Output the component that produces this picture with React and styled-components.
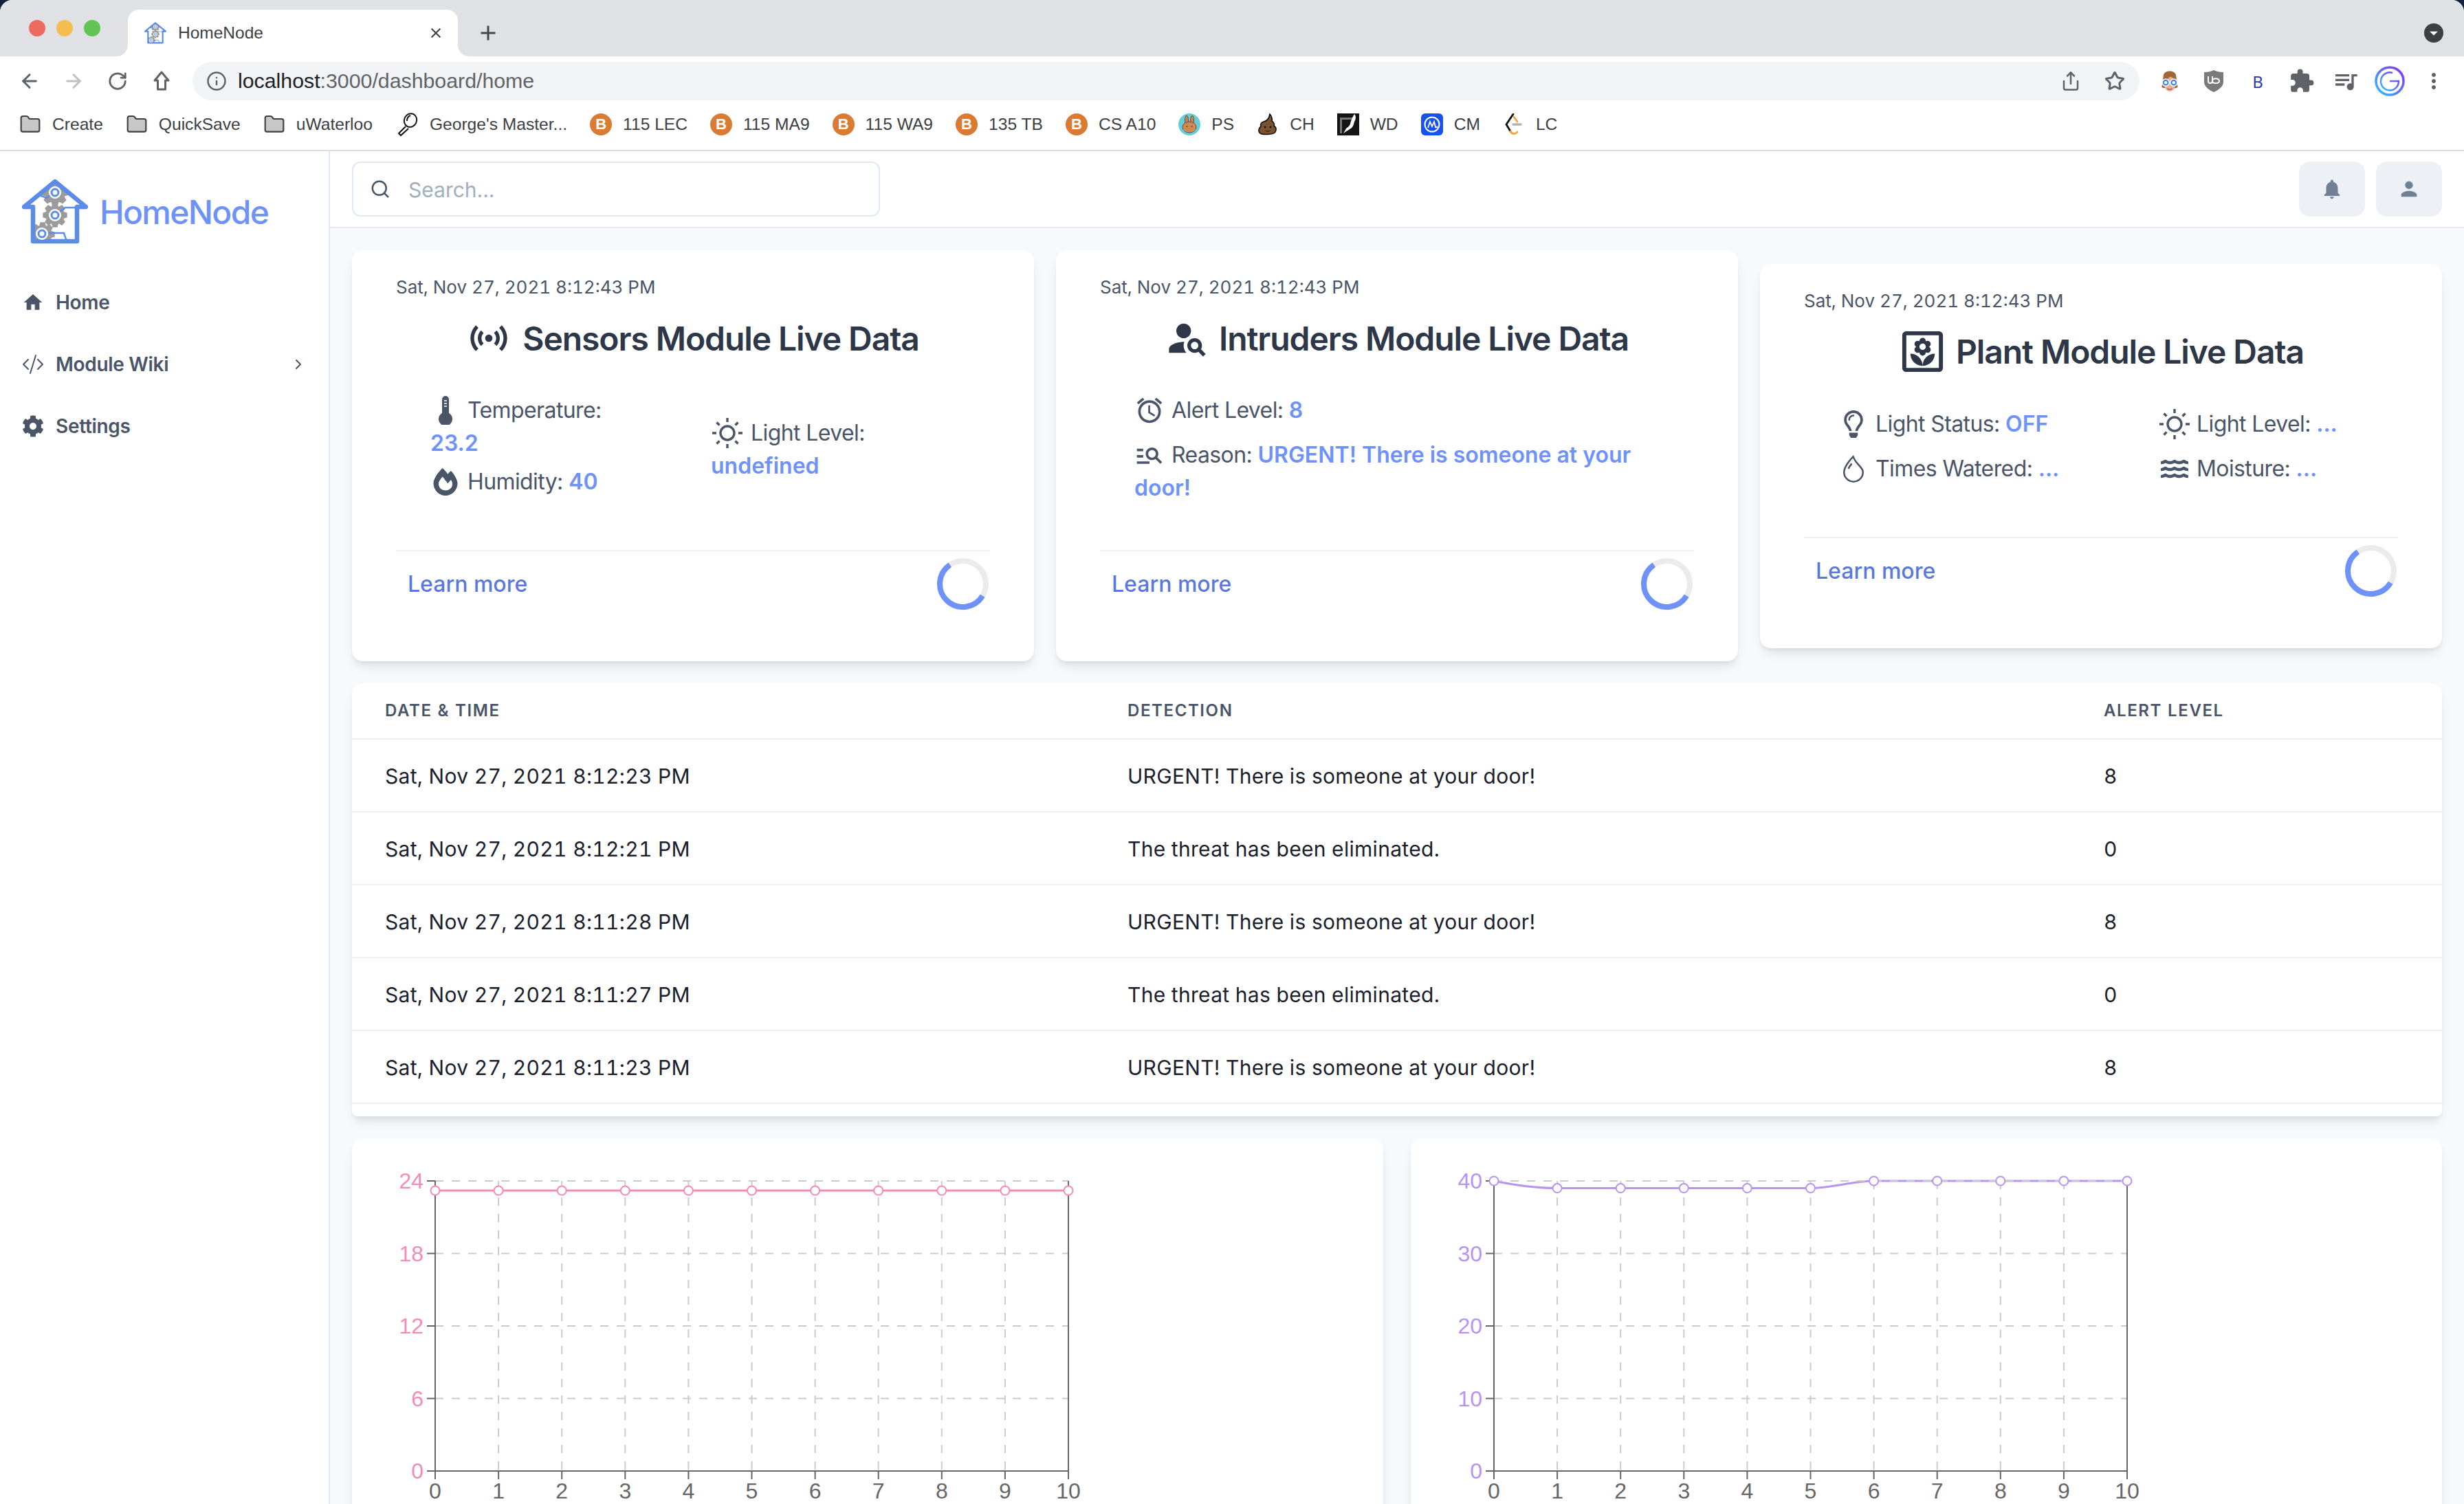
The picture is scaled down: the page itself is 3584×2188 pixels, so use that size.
import React, { useId } from "react";
import styled, { createGlobalStyle } from "styled-components";
import { FaCog, FaFireAlt, FaRegLightbulb, FaWater } from "react-icons/fa";
import { BsCodeSlash, BsDroplet } from "react-icons/bs";
import { FiChevronRight, FiSearch } from "react-icons/fi";
import {
  MdHome, MdNotifications, MdPerson, MdSensors, MdPersonSearch, MdOutlineYard, MdOutlineAccessAlarm,
  MdManageSearch, MdQueueMusic, MdMoreVert, MdArrowDropDown, MdClose, MdAdd, MdExtension,
} from "react-icons/md";
import { ArrowLeft, ArrowRight, RotateCw, Info, Share, Star, Folder } from "lucide-react";

const BLUE = "#6e92f7";

const Global = createGlobalStyle`
  html, body { margin: 0; padding: 0; background: #12203a; }
  * { box-sizing: border-box; }
  #root { width: 3584px; height: 2188px; overflow: hidden; }
`;

const Frame = styled.div`
  width: 3584px; height: 2188px; display: flex; flex-direction: column;
  border-radius: 18px 18px 0 0; overflow: hidden; background: #fff;
  font-family: Inter, "Noto Sans", sans-serif;
`;

/* Browser chrome */
const TabStrip = styled.div`
  height: 82px; background: #dfe1e5; display: flex; align-items: flex-end; position: relative; flex: none;
`;
const Lights = styled.div`
  width: 186px; height: 82px; padding-left: 42px; display: flex; align-items: center; gap: 16px;
`;
const Light = styled.span`
  width: 24px; height: 24px; border-radius: 50%; background: ${p => p.$c};
`;
const Tab = styled.div`
  width: 480px; height: 68px; background: #fff; border-radius: 16px 16px 0 0;
  display: flex; align-items: center; padding: 0 20px 0 24px; position: relative;
  font: 24.5px "Liberation Sans", Arial, sans-serif; color: #3c4043;
  &::before, &::after { content: ""; position: absolute; bottom: 0; width: 16px; height: 16px; }
  &::before { left: -16px; background: radial-gradient(circle at 0 0, #dfe1e5 15.5px, #fff 16px); }
  &::after { right: -16px; background: radial-gradient(circle at 100% 0, #dfe1e5 15.5px, #fff 16px); }
`;
const TabTitle = styled.span` margin-left: 17px; flex: 1; `;
const NewTab = styled.div`
  width: 40px; height: 68px; margin-left: 24px; display: flex; align-items: center; justify-content: center; color: #45474a;
`;
const TabMenu = styled.div`
  position: absolute; right: 30px; top: 34px; width: 28px; height: 28px; border-radius: 50%;
  background: #3c4043; color: #fff; display: flex; align-items: center; justify-content: center;
`;
const Toolbar = styled.div`
  height: 64px; display: flex; align-items: flex-end; padding: 0 12px 0 11px; flex: none; background: #fff;
`;
const ToolBtn = styled.div`
  width: 64px; height: 56px; flex: none; display: flex; align-items: center; justify-content: center;
  color: ${p => p.$c || "#5f6368"};
`;
const LetterMark = styled.span` font: 24px "Noto Sans", sans-serif; `;
const AddressBar = styled.div`
  flex: 1; height: 56px; margin: 0 12px 0 13px; background: #f1f3f4; border-radius: 28px;
  display: flex; align-items: center; padding: 0 4px 0 20px; color: #5f6368;
`;
const Url = styled.div`
  flex: 1; margin-left: 16px; font: 30.3px "Liberation Sans", Arial, sans-serif; color: #5f6368;
  b { font-weight: 400; color: #202124; }
`;
const Bookmarks = styled.div`
  height: 74px; display: flex; align-items: center; padding: 0 0 2px 28px; gap: 33px; flex: none;
  border-bottom: 2px solid #dadce0; background: #fff;
  font: 24.6px "Liberation Sans", Arial, sans-serif; color: #3c4043;
`;
const Mark = styled.div`
  display: flex; align-items: center; gap: 16px; white-space: nowrap;
`;
const Coin = styled.span`
  width: 32px; height: 32px; border-radius: 50%; background: #d97b33; color: #fff; flex: none;
  display: flex; align-items: center; justify-content: center; font: 700 22px "Liberation Sans", sans-serif;
`;

/* Application shell */
const Shell = styled.div` flex: 1; display: flex; min-height: 0; `;
const Sidebar = styled.aside`
  width: 480px; flex: none; border-right: 2px solid #e2e8f0; background: #fff; padding-top: 40px;
`;
const Brand = styled.div`
  display: flex; align-items: center; gap: 17px; padding-left: 32px; height: 94px;
  font-size: 48px; font-weight: 500; letter-spacing: -1.7px; color: ${BLUE}; margin-bottom: 41px;
  padding-top: 2px;
`;
const NavItem = styled.div`
  height: 90px; display: flex; align-items: center; padding: 0 32px; font-size: 28px; font-weight: 600;
  letter-spacing: -0.3px; color: #4a5568;
`;
const NavIcon = styled.span`
  width: 32px; height: 32px; display: flex; align-items: center; justify-content: center; margin-right: 17px;
`;
const NavLabel = styled.span` flex: 1; `;

const Content = styled.div` flex: 1; min-width: 0; display: flex; flex-direction: column; `;
const TopBar = styled.header`
  height: 112px; flex: none; background: #fff; border-bottom: 2px solid #e2e8f0; padding: 16px 32px;
  display: flex; align-items: center; gap: 16px;
`;
const Search = styled.div`
  width: 768px; height: 80px; border: 2px solid #e2e8f0; border-radius: 12px; display: flex; align-items: center;
  padding-left: 24px; margin-right: auto; color: #4a5568; background: #fff;
`;
const SearchText = styled.span` margin-left: 26px; padding-top: 2px; font-size: 30px; color: #a0aec0; `;
const IconButton = styled.div`
  width: 96px; height: 80px; border-radius: 16px; background: #edf0f5; color: #718096;
  display: flex; align-items: center; justify-content: center;
`;
const Main = styled.main`
  flex: 1; min-height: 0; background: #f7fafc; padding: 32px; display: flex; flex-direction: column; gap: 32px; overflow: hidden;
`;

/* Module cards */
const CardRow = styled.section`
  display: grid; grid-template-columns: repeat(3, 992px); gap: 32px; align-items: stretch; flex: none;
`;
const Card = styled.article`
  background: #fff; border-radius: 16px; display: flex; flex-direction: column; padding: 38px 64px 0;
  box-shadow: 0 10px 15px -3px rgba(0,0,0,.1), 0 4px 6px -2px rgba(0,0,0,.05);
  align-self: ${p => (p.$center ? "center" : "stretch")};
`;
const Stamp = styled.div`
  font-size: 26px; line-height: 32px; color: #4a5568; font-variant-numeric: tabular-nums;
`;
const Title = styled.h2`
  margin: 28px 0 0; height: 60px; display: flex; align-items: center; justify-content: center;
  font-size: 48px; font-weight: 600; letter-spacing: -1.08px; color: #2d3748; white-space: nowrap;
`;
const TitleIcon = styled.span`
  display: flex; align-items: center; justify-content: center; margin-right: ${p => p.$gap}px; width: ${p => p.$size}px; height: 60px;
`;
const Body = styled.div`
  flex: 1; padding: 51px 0 ${p => p.$pb || 75}px 50px; font-size: 32px; line-height: 48px; letter-spacing: -0.6px; color: #4a5568;
`;
const StatGrid = styled.div`
  display: grid; grid-template-columns: ${p => p.$first}px 1fr; row-gap: ${p => p.$gap || 0}px; align-items: center;
`;
const StatColumn = styled.div`
  display: flex; flex-direction: column; gap: 8px; margin-top: ${p => p.$top || 0}px;
`;
const Stat = styled.div`
  max-width: ${p => (p.$max ? `${p.$max}px` : "none")}; margin-bottom: ${p => p.$mb || 0}px;
`;
const StatIcon = styled.span`
  display: inline-flex; align-items: center; justify-content: center; vertical-align: top;
  width: ${p => p.$w || 44}px; height: 48px; margin-right: 10px; color: #4a5568;
`;
const Value = styled.span` font-weight: 600; letter-spacing: 0; color: ${BLUE}; `;
const CardFoot = styled.div`
  height: 162px; border-top: 2px solid #edf2f7; padding: 10px 2px 0 17px; display: flex; align-items: flex-start; justify-content: space-between; flex: none;
`;
const LearnMore = styled.a`
  height: 75px; display: flex; align-items: center; font-size: 32px; font-weight: 500; color: #5a78e0;
`;

/* Table */
const TableCard = styled.section`
  background: #fff; border-radius: 16px 16px 8px 8px; height: 630px; flex: none; overflow: hidden;
  box-shadow: 0 10px 15px -3px rgba(0,0,0,.1), 0 4px 6px -2px rgba(0,0,0,.05);
`;
const TRow = styled.div`
  display: grid; grid-template-columns: 1080px 1420px 1fr; align-items: center;
  height: ${p => (p.$head ? 82 : 106)}px; border-bottom: 2px solid #edf2f7;
  padding-top: ${p => (p.$head ? 0 : 2)}px; padding-bottom: ${p => (p.$head ? 2 : 0)}px;
  font-size: ${p => (p.$head ? 24 : 30)}px; font-weight: ${p => (p.$head ? 600 : 400)};
  color: ${p => (p.$head ? "#4a5568" : "#1a202c")};
  letter-spacing: ${p => (p.$head ? "1.6px" : "0.3px")};
  font-variant-numeric: tabular-nums;
  text-transform: ${p => (p.$head ? "uppercase" : "none")};
`;
const TCell = styled.div` padding-left: 48px; `;

/* Charts */
const ChartRow = styled.section`
  display: grid; grid-template-columns: repeat(2, 1500px); gap: 40px; flex: none;
`;
const ChartCard = styled.div`
  background: #fff; border-radius: 16px; height: 560px;
  box-shadow: 0 10px 15px -3px rgba(0,0,0,.1), 0 4px 6px -2px rgba(0,0,0,.05);
`;
const ChartSvg = styled.svg`
  display: block; width: 1500px; height: 560px; font-family: "Liberation Sans", Arial, sans-serif; font-size: 32px;
`;

function gearPath(cx, cy, R, r, n) {
  const pts = [];
  for (let i = 0; i < n; i++) {
    const a = (i / n) * Math.PI * 2;
    const w = (Math.PI * 2) / n;
    [[-0.5, r], [-0.26, R], [0.26, R], [0.5, r]].forEach(([o, rad]) => {
      const t = a + o * w * 0.95;
      pts.push(`${(cx + Math.cos(t) * rad).toFixed(2)} ${(cy + Math.sin(t) * rad).toFixed(2)}`);
    });
  }
  return `M${pts.join("L")}Z`;
}

function Logo({ width, height }) {
  const id = useId();
  const gears = [[48, 19, 20, 15], [48, 52, 18, 13.5], [30, 80, 18, 13.5]];
  return (
    <svg width={width} height={height} viewBox="0 0 96 94" fill="none">
      <clipPath id={id}><path d="M16 40H3L48 3l45 37H80v50H16Z" /></clipPath>
      <g clipPath={`url(#${id})`}>
        {gears.map(([x, y, R, r], i) => (
          <path key={i} d={gearPath(x, y, R, r, 8)} fill="#9b9b9b" />
        ))}
      </g>
      <path d="M16 40H3L48 3l45 37H80v50H16Z" stroke="#5b8de8" strokeWidth="6.5" strokeLinejoin="round" />
      <g stroke="#5b8de8" strokeWidth="2.4">
        <path d="M22 22l14 5 6-4" />
        <path d="M53 49l10-8h16" />
        <path d="M35 78h26l4 12" />
      </g>
      {[[48, 19], [48, 52], [29, 79]].map(([x, y], i) => (
        <g key={i}>
          <circle cx={x} cy={y} r="9" fill="#fff" />
          <circle cx={x} cy={y} r="5" stroke="#5b8de8" strokeWidth="3" fill="#fff" />
        </g>
      ))}
    </svg>
  );
}

const HomeOutline = () => (
  <svg width="26" height="32" viewBox="0 0 26 32" fill="none" stroke="#5f6368" strokeWidth="3" strokeLinejoin="round">
    <path d="M13 3 3 15h4.5v13h11V15H23Z" />
  </svg>
);

const Loupe = () => (
  <svg width="34" height="36" viewBox="0 0 34 36" fill="none" stroke="#111" strokeWidth="2">
    <ellipse cx="22" cy="12" rx="9" ry="10" transform="rotate(25 22 12)" fill="#fff" />
    <path d="M22 5c-3 1-5 4-5 8" />
    <path d="M15 21 5 31l3 3 11-10" fill="#fff" />
  </svg>
);

const Bunny = () => (
  <svg width="32" height="32" viewBox="0 0 32 32">
    <circle cx="16" cy="16" r="16" fill="#62cfd9" />
    <ellipse cx="12" cy="10" rx="2.5" ry="7" fill="#c78551" stroke="#633" strokeWidth=".8" />
    <ellipse cx="20" cy="10" rx="2.5" ry="7" fill="#c78551" stroke="#633" strokeWidth=".8" />
    <ellipse cx="16" cy="20" rx="10" ry="8" fill="#d1884f" stroke="#633" strokeWidth=".8" />
    <path d="M7 23c4 5 14 5 18 0-1 5-17 5-18 0Z" fill="#f2d9a6" />
    <circle cx="12.5" cy="19" r="1" fill="#452" /><circle cx="19.5" cy="19" r="1" fill="#452" />
  </svg>
);

const Poop = () => (
  <svg width="32" height="32" viewBox="0 0 32 32">
    <path d="M19 1c3 4 4 7 3 10 3 2 4 5 3 7 3 2 4 5 2 9-2 4-20 5-23 1-2-3-1-7 2-9-1-3 0-6 4-7 5-1 8-5 9-11Z" fill="#7a5230" stroke="#111" strokeWidth="1.6" />
    <circle cx="12" cy="20" r="1.4" fill="#111" /><circle cx="20" cy="20" r="1.4" fill="#111" />
    <path d="M13 25c2 1.5 4 1.5 6 0" stroke="#111" fill="none" />
  </svg>
);

const Jumper = () => (
  <svg width="32" height="32" viewBox="0 0 32 32">
    <rect width="32" height="32" fill="#141414" />
    <path d="M4 6h18v3H7v20H4Z" fill="#777" />
    <path d="M25 1c3 3 2 8 0 11-1 3-1 6-4 9-3 2-8 5-12 8l4-7c2-2 5-3 6-7 1-5 3-9 6-14Z" fill="#fff" />
  </svg>
);

const CoinMarket = () => (
  <svg width="32" height="32" viewBox="0 0 32 32" fill="none">
    <rect width="32" height="32" rx="6" fill="#1652f0" />
    <circle cx="16" cy="16" r="10.5" stroke="#fff" strokeWidth="2" />
    <path d="M10 21l3-9 3 7 3-7 2 8c1 1 2 0 3-1" stroke="#fff" strokeWidth="1.8" />
  </svg>
);

const LeetCode = () => (
  <svg width="32" height="32" viewBox="0 0 32 32" fill="none" strokeLinecap="round">
    <path d="M15 1 5 16l6 10" stroke="#111" strokeWidth="2.8" />
    <path d="M16 5l5 7M11 26c2 4 7 5 10 1" stroke="#f2a33c" strokeWidth="2.8" />
    <path d="M15 16h11" stroke="#b3b3b3" strokeWidth="3.6" />
  </svg>
);

const Reader = () => (
  <svg width="30" height="32" viewBox="0 0 40 44">
    <path d="M7 14C7 5 13 2 20 2s13 3 13 12l3 20c-4 4-28 4-32 0Z" fill="#a0683a" />
    <ellipse cx="20" cy="28" rx="11" ry="15" fill="#eeb08e" />
    <path d="M9 20c6-1 11-5 14-10 2 4 5 7 8 9-1-10-5-13-11-13S9 10 9 20Z" fill="#a0683a" />
    <circle cx="12" cy="25" r="7" fill="#3c88e8" stroke="#fff" strokeWidth="2" />
    <circle cx="28" cy="25" r="7" fill="#3c88e8" stroke="#fff" strokeWidth="2" />
    <circle cx="12" cy="25" r="3" fill="#fff" /><circle cx="28" cy="25" r="3" fill="#fff" />
    <path d="M15 37c3 2 7 2 10 0" stroke="#a55" strokeWidth="2" fill="none" />
  </svg>
);

const UShield = () => (
  <svg width="30" height="32" viewBox="0 0 30 32">
    <path d="M15 0c4 2 8 3 14 3v14c0 7-7 12-14 15C8 29 1 24 1 17V3c6 0 10-1 14-3Z" fill="#7a7a7a" />
    <path d="M7 9v7c0 4 6 4 6 0V9M13 16c0 4 10 4 10 0 0-5-10-5-10 0Z" fill="none" stroke="#fff" strokeWidth="2" />
  </svg>
);

const GRing = () => {
  const id = useId();
  return (
    <svg width="44" height="44" viewBox="0 0 44 44" fill="none">
      <linearGradient id={id} x1="1" y1="0" x2="0" y2="1">
        <stop offset="0" stopColor="#8b2cf5" /><stop offset="1" stopColor="#2bc4fa" />
      </linearGradient>
      <circle cx="22" cy="22" r="20" stroke={`url(#${id})`} strokeWidth="3.5" />
      <path d="M26 10A13 13 0 1 0 35 22H22" stroke={`url(#${id})`} strokeWidth="2.5" />
    </svg>
  );
};

const Thermo = () => (
  <svg width="22" height="42" viewBox="0 0 22 42">
    <path d="M6 5a5 5 0 0 1 10 0v20a10 10 0 1 1-10 0Z" fill="#4a5568" />
    <path d="M9 7h4M9 11h4M9 15h4" stroke="#fff" strokeWidth="1.4" />
  </svg>
);

const Sun = () => (
  <svg width="44" height="44" viewBox="0 0 44 44" fill="none" stroke="#4a5568">
    <circle cx="22" cy="22" r="10" strokeWidth="3.4" />
    <path d="M22 0v6M22 38v6M0 22h6M38 22h6M6.5 6.5l4 4M33.5 33.5l4 4M6.5 37.5l4-4M33.5 10.5l4-4" strokeWidth="3.4" />
  </svg>
);

const Spinner = () => (
  <svg width="75" height="75" viewBox="0 0 75 75" fill="none" strokeWidth="8">
    <circle cx="37.5" cy="37.5" r="33.5" stroke="#ebebeb" />
    <path d="M66.2 54.8A33.5 33.5 0 1 1 18.8 9.7" stroke={BLUE} />
  </svg>
);

const pointsX = i => 121 + i * 92.1;

function Chart({ color, ticks, max, data, smooth }) {
  const top = 62, bottom = 484;
  const y = v => bottom - (v / max) * (bottom - top);
  const pts = data.map((v, i) => [pointsX(i), y(v)]);
  let d = `M${pts[0][0]} ${pts[0][1]}`;
  for (let i = 1; i < pts.length; i++) {
    const [a, b] = pts[i - 1];
    const [c, e] = pts[i];
    d += smooth
      ? `C${a + 30} ${i === 1 ? b + 6 : b},${c - 30} ${e},${c} ${e}`
      : `L${c} ${e}`;
  }
  const xs = Array.from({ length: 11 }, (_, i) => i);
  return (
    <ChartSvg viewBox="0 0 1500 560">
      <path d={d} stroke={color} strokeWidth="3" fill="none" />
      <g stroke="#ccc" strokeWidth="2" strokeDasharray="12 12">
        {ticks.map(t => <line key={t} x1="121" x2="1042" y1={y(t)} y2={y(t)} />)}
        {xs.map(i => <line key={i} x1={pointsX(i)} x2={pointsX(i)} y1={top} y2={bottom} />)}
      </g>
      <g stroke="#666" strokeWidth="2">
        <line x1="121" x2="121" y1={top} y2={bottom} />
        <line x1="1042" x2="1042" y1={top} y2={bottom} />
        <line x1="121" x2="1042" y1={bottom} y2={bottom} />
        {ticks.map(t => <line key={t} x1="109" x2="121" y1={y(t)} y2={y(t)} />)}
        {xs.map(i => <line key={i} x1={pointsX(i)} x2={pointsX(i)} y1={bottom} y2={bottom + 12} />)}
      </g>
      {ticks.map(t => (
        <text key={t} x="104" y={y(t) + 11} textAnchor="end" fill={color}>{t}</text>
      ))}
      {xs.map(i => (
        <text key={i} x={pointsX(i)} y="524" textAnchor="middle" fill="#666">{i}</text>
      ))}
      {pts.map(([a, b], i) => (
        <circle key={i} cx={a} cy={b} r="6.5" fill="#fff" stroke={color} strokeWidth="2" />
      ))}
    </ChartSvg>
  );
}

const folder = <Folder size={32} color="#3c4043" fill="#c8c8c8" strokeWidth={1.6} />;
const coin = <Coin>B</Coin>;
const bookmarks = [
  ["Create", folder], ["QuickSave", folder], ["uWaterloo", folder],
  ["George's Master...", <Loupe />],
  ["115 LEC", coin], ["115 MA9", coin], ["115 WA9", coin], ["135 TB", coin], ["CS A10", coin],
  ["PS", <Bunny />], ["CH", <Poop />], ["WD", <Jumper />], ["CM", <CoinMarket />], ["LC", <LeetCode />],
];

const rows = [
  ["Sat, Nov 27, 2021 8:12:23 PM", "URGENT! There is someone at your door!", "8"],
  ["Sat, Nov 27, 2021 8:12:21 PM", "The threat has been eliminated.", "0"],
  ["Sat, Nov 27, 2021 8:11:28 PM", "URGENT! There is someone at your door!", "8"],
  ["Sat, Nov 27, 2021 8:11:27 PM", "The threat has been eliminated.", "0"],
  ["Sat, Nov 27, 2021 8:11:23 PM", "URGENT! There is someone at your door!", "8"],
];

const STAMP = "Sat, Nov 27, 2021 8:12:43 PM";

const CardFooter = () => (
  <CardFoot>
    <LearnMore>Learn more</LearnMore>
    <Spinner />
  </CardFoot>
);

export default function App() {
  return (
    <>
      <Global />
      <Frame>
        <TabStrip>
          <Lights>
            <Light $c="#ee6a5f" /><Light $c="#f5bd4f" /><Light $c="#61c454" />
          </Lights>
          <Tab>
            <Logo width={32} height={32} />
            <TabTitle>HomeNode</TabTitle>
            <MdClose size={24} color="#3c4043" />
          </Tab>
          <NewTab><MdAdd size={36} /></NewTab>
          <TabMenu><MdArrowDropDown size={34} /></TabMenu>
        </TabStrip>
        <Toolbar>
          <ToolBtn><ArrowLeft size={32} strokeWidth={2.2} /></ToolBtn>
          <ToolBtn $c="#bdc1c6"><ArrowRight size={32} strokeWidth={2.2} /></ToolBtn>
          <ToolBtn><RotateCw size={30} strokeWidth={2.2} /></ToolBtn>
          <ToolBtn><HomeOutline /></ToolBtn>
          <AddressBar>
            <Info size={30} strokeWidth={2} />
            <Url><b>localhost</b>:3000/dashboard/home</Url>
            <ToolBtn><Share size={30} strokeWidth={2} /></ToolBtn>
            <ToolBtn><Star size={30} strokeWidth={2.4} /></ToolBtn>
          </AddressBar>
          <ToolBtn><Reader /></ToolBtn>
          <ToolBtn><UShield /></ToolBtn>
          <ToolBtn $c="#2f3bb0"><LetterMark>B</LetterMark></ToolBtn>
          <ToolBtn><MdExtension size={38} /></ToolBtn>
          <ToolBtn><MdQueueMusic size={40} /></ToolBtn>
          <ToolBtn><GRing /></ToolBtn>
          <ToolBtn><MdMoreVert size={36} /></ToolBtn>
        </Toolbar>
        <Bookmarks>
          {bookmarks.map(([label, icon]) => (
            <Mark key={label}>{icon}<span>{label}</span></Mark>
          ))}
        </Bookmarks>
        <Shell>
          <Sidebar>
            <Brand><Logo width={96} height={94} />HomeNode</Brand>
            <NavItem><NavIcon><MdHome size={34} /></NavIcon><NavLabel>Home</NavLabel></NavItem>
            <NavItem>
              <NavIcon><BsCodeSlash size={32} /></NavIcon>
              <NavLabel>Module Wiki</NavLabel>
              <FiChevronRight size={24} />
            </NavItem>
            <NavItem><NavIcon><FaCog size={32} /></NavIcon><NavLabel>Settings</NavLabel></NavItem>
          </Sidebar>
          <Content>
            <TopBar>
              <Search>
                <FiSearch size={30} strokeWidth={2} />
                <SearchText>Search...</SearchText>
              </Search>
              <IconButton><MdNotifications size={34} /></IconButton>
              <IconButton><MdPerson size={34} /></IconButton>
            </TopBar>
            <Main>
              <CardRow>
                <Card>
                  <Stamp>{STAMP}</Stamp>
                  <Title>
                    <TitleIcon $size={64} $gap={17}><MdSensors size={64} /></TitleIcon>
                    Sensors Module Live Data
                  </Title>
                  <Body>
                    <StatGrid $first={408}>
                      <StatColumn>
                        <Stat $max={300}>
                          <StatIcon><Thermo /></StatIcon>Temperature: <Value>23.2</Value>
                        </Stat>
                        <Stat $max={300}>
                          <StatIcon><FaFireAlt size={40} /></StatIcon>Humidity: <Value>40</Value>
                        </Stat>
                      </StatColumn>
                      <StatColumn $top={10}>
                        <Stat $max={330}>
                          <StatIcon $w={48}><Sun /></StatIcon>Light Level: <Value>undefined</Value>
                        </Stat>
                      </StatColumn>
                    </StatGrid>
                  </Body>
                  <CardFooter />
                </Card>
                <Card>
                  <Stamp>{STAMP}</Stamp>
                  <Title>
                    <TitleIcon $size={64} $gap={14}><MdPersonSearch size={64} /></TitleIcon>
                    Intruders Module Live Data
                  </Title>
                  <Body $pb={66}>
                    <Stat $mb={17}>
                      <StatIcon><MdOutlineAccessAlarm size={48} /></StatIcon>Alert Level: <Value>8</Value>
                    </Stat>
                    <Stat $max={760}>
                      <StatIcon><MdManageSearch size={48} /></StatIcon>Reason: <Value>URGENT! There is someone at your door!</Value>
                    </Stat>
                  </Body>
                  <CardFooter />
                </Card>
                <Card $center>
                  <Stamp>{STAMP}</Stamp>
                  <Title>
                    <TitleIcon $size={71} $gap={13}><MdOutlineYard size={71} /></TitleIcon>
                    Plant Module Live Data
                  </Title>
                  <Body>
                    <StatGrid $first={467} $gap={17}>
                      <Stat><StatIcon><FaRegLightbulb size={40} /></StatIcon>Light Status: <Value>OFF</Value></Stat>
                      <Stat><StatIcon><Sun /></StatIcon>Light Level: <Value>...</Value></Stat>
                      <Stat><StatIcon><BsDroplet size={40} /></StatIcon>Times Watered: <Value>...</Value></Stat>
                      <Stat><StatIcon><FaWater size={40} /></StatIcon>Moisture: <Value>...</Value></Stat>
                    </StatGrid>
                  </Body>
                  <CardFooter />
                </Card>
              </CardRow>
              <TableCard>
                <TRow $head>
                  <TCell>Date &amp; Time</TCell><TCell>Detection</TCell><TCell>Alert Level</TCell>
                </TRow>
                {rows.map(r => (
                  <TRow key={r[0]}>
                    <TCell>{r[0]}</TCell><TCell>{r[1]}</TCell><TCell>{r[2]}</TCell>
                  </TRow>
                ))}
              </TableCard>
              <ChartRow>
                <ChartCard>
                  <Chart color="#f48cb6" ticks={[0, 6, 12, 18, 24]} max={24} data={Array(11).fill(23.2)} />
                </ChartCard>
                <ChartCard>
                  <Chart color="#b794f4" ticks={[0, 10, 20, 30, 40]} max={40} data={[40, 39, 39, 39, 39, 39, 40, 40, 40, 40, 40]} smooth />
                </ChartCard>
              </ChartRow>
            </Main>
          </Content>
        </Shell>
      </Frame>
    </>
  );
}
